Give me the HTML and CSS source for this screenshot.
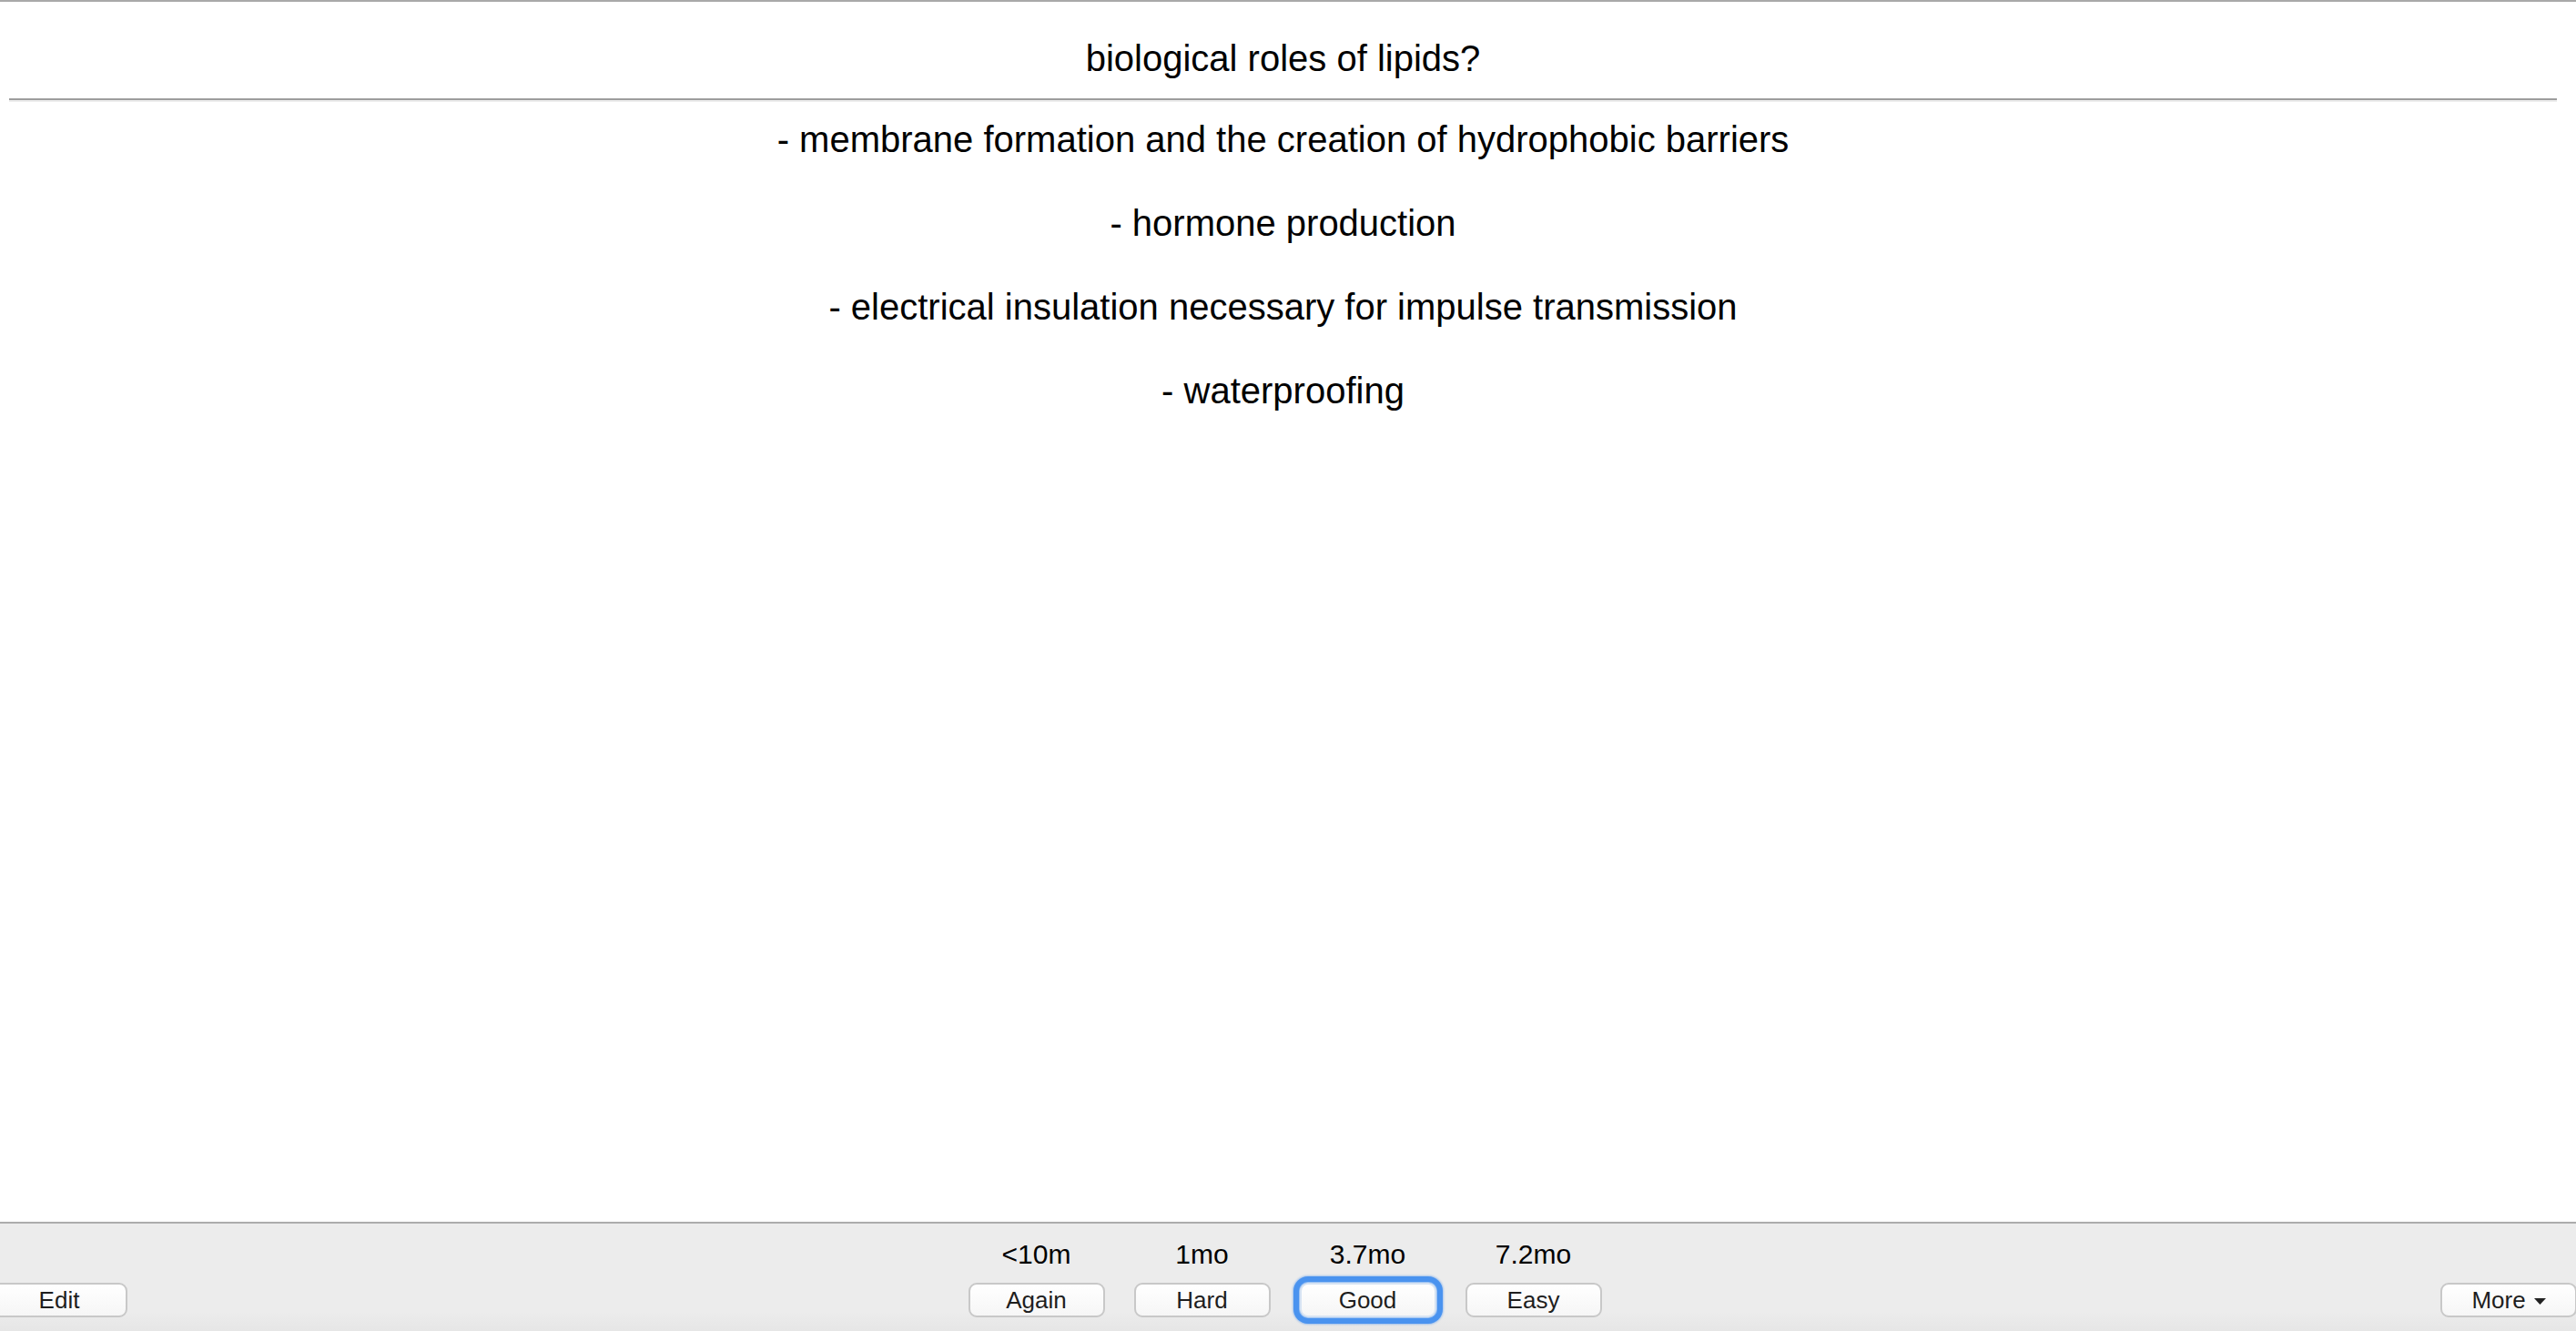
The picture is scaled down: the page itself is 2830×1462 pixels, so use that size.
FILE: index.html
```html
<!DOCTYPE html>
<html lang="en">
<head>
<meta charset="utf-8">
<title>Review</title>
<link rel="stylesheet" href="styles.css">
</head>
<body>
<div class="app">
  <main class="card">
    <div class="question">biological roles of lipids?</div>
    <hr class="answer-rule">
    <div class="answer">
      <p>- membrane formation and the creation of hydrophobic barriers</p>
      <p>- hormone production</p>
      <p>- electrical insulation necessary for impulse transmission</p>
      <p>- waterproofing</p>
    </div>
  </main>
  <footer class="bottombar">
    <div class="side side-left">
      <button class="btn btn-edit">Edit</button>
    </div>
    <div class="ease">
      <div class="ease-col"><span class="interval">&lt;10m</span><button class="btn">Again</button></div>
      <div class="ease-col"><span class="interval">1mo</span><button class="btn">Hard</button></div>
      <div class="ease-col"><span class="interval">3.7mo</span><button class="btn btn-focus">Good</button></div>
      <div class="ease-col"><span class="interval">7.2mo</span><button class="btn">Easy</button></div>
    </div>
    <div class="side side-right">
      <button class="btn btn-more">More<svg class="caret" width="13" height="7" viewBox="0 0 13 7"><polygon points="0,0 13,0 6.5,7" fill="#222"/></svg></button>
    </div>
  </footer>
</div>
</body>
</html>
```
FILE: styles.css
```css
html, body {
  margin: 0;
  padding: 0;
  height: 100%;
  overflow: hidden;
  background: #fff;
}

body {
  font-family: "Liberation Sans", Arial, Helvetica, sans-serif;
}

.app {
  display: flex;
  flex-direction: column;
  height: 100vh;
}

.card {
  flex: 1;
  border-top: 2px solid #a9a9a9;
  padding: 39px 21px 0 10px;
  text-align: center;
  font-size: 40px;
  line-height: 46px;
  color: #000;
  background: #fff;
}

.answer-rule {
  height: 0;
  margin: 21px 0 18px;
  border: 0;
  border-top: 2px solid #9d9d9d;
  border-bottom: 2px solid #ededed;
}

.answer p {
  margin: 0 0 46px;
}

.bottombar {
  box-sizing: border-box;
  height: 120px;
  flex: none;
  margin-left: -8px;
  width: calc(100% + 9px);
  border-top: 2px solid #acacac;
  background: linear-gradient(to bottom, #ececec 0, #ececec 82%, #e6e6e6 100%);
  display: grid;
  grid-template-columns: 1fr auto 1fr;
  align-items: end;
  padding-bottom: 15px;
}

.side {
  display: flex;
}

.side-left {
  justify-content: flex-start;
}

.side-right {
  justify-content: flex-end;
}

.ease {
  display: flex;
  gap: 32px;
}

.ease-col {
  display: flex;
  flex-direction: column;
  align-items: center;
  gap: 14px;
}

.interval {
  font-size: 30px;
  line-height: 34px;
  color: #000;
  white-space: nowrap;
}

.btn {
  box-sizing: border-box;
  width: 150px;
  height: 38px;
  padding: 0;
  border: 2px solid #c8c8c8;
  border-radius: 9px;
  background: linear-gradient(to bottom, #ffffff, #f6f6f6);
  font-family: "Liberation Sans", Arial, Helvetica, sans-serif;
  font-size: 26px;
  line-height: 34px;
  color: #1e1e1e;
  display: inline-flex;
  align-items: center;
  justify-content: center;
}

.btn-edit {
  margin-left: -2px;
}

.btn-focus {
  border-color: #d6e3f3;
  box-shadow: 0 0 0 1px #9cc2f2, 0 0 0 7px #4a93ef, 0 0 2px 8px rgba(74, 147, 239, 0.45);
}

.btn-more {
  gap: 9px;
}

.caret {
  display: block;
  margin-top: 2px;
}
```
